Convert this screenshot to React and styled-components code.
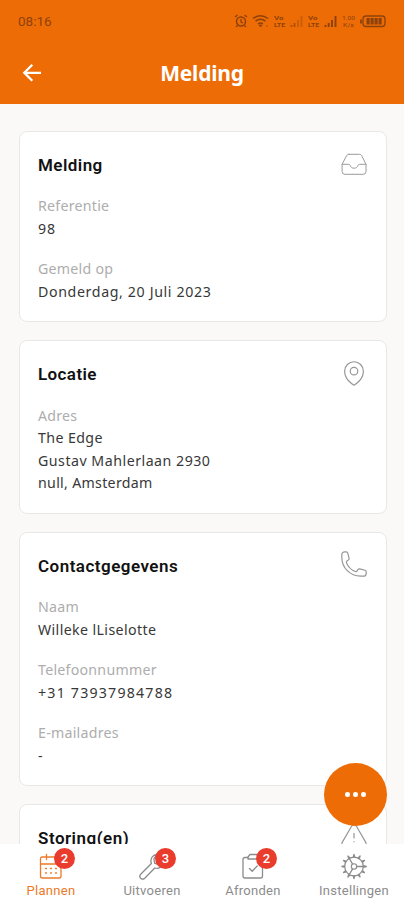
import React from "react";
import styled, { createGlobalStyle } from "styled-components";
import {
  HiOutlineMapPin,
  HiOutlinePhone,
  HiOutlineExclamationTriangle,
} from "react-icons/hi2";

const GlobalStyle = createGlobalStyle`
  *, *::before, *::after { box-sizing: border-box; }
  body { margin: 0; background: #faf9f8; }
`;

const Screen = styled.div`
  position: relative;
  display: flex;
  flex-direction: column;
  width: 404px;
  height: 900px;
  overflow: hidden;
  background: #faf9f8;
  font-family: "Noto Sans", sans-serif;
  color: #383838;
`;

const Header = styled.header`
  flex: none;
  height: 104px;
  background: #ed6c05;
`;

const StatusBar = styled.div`
  display: flex;
  align-items: center;
  justify-content: space-between;
  height: 42px;
  padding: 0 17px 0 18px;
  color: #8d420b;
`;

const Clock = styled.time`
  font: 400 13.5px/20px Roboto, sans-serif;
  letter-spacing: 0;
`;

const StatusIcons = styled.svg`
  display: block;
  width: 154px;
  height: 16px;
`;

const TitleBar = styled.div`
  display: grid;
  grid-template-columns: 1fr auto 1fr;
  align-items: center;
  height: 62px;
  padding: 0 20px;
`;

const BackButton = styled.button`
  display: flex;
  width: 24px;
  height: 24px;
  padding: 0;
  border: 0;
  background: none;
  color: #fff;
`;

const ScreenTitle = styled.h1`
  margin: 0;
  font-size: 21px;
  line-height: 28px;
  font-weight: 700;
  letter-spacing: -0.2px;
  color: #fff;
`;

const Content = styled.main`
  flex: 1;
  min-height: 0;
  overflow: hidden;
  display: flex;
  flex-direction: column;
  gap: 18px;
  padding: 27px 17.5px 0 18.5px;
`;

const CardBox = styled.section`
  flex: none;
  padding: 18px 18px 18px 18.5px;
  border: 1px solid #e9e8e7;
  border-radius: 8px;
  background: #fff;
`;

const CardHeader = styled.div`
  display: flex;
  align-items: center;
  justify-content: space-between;
  height: 28px;
  margin-bottom: 17.4px;
`;

const CardTitle = styled.h2`
  margin: 0;
  padding-top: 1.5px;
  font: 600 17px/24px Roboto, sans-serif;
  letter-spacing: ${(p) => p.$tracking}px;
  color: #111;
`;

const CardIcon = styled.span`
  display: flex;
  margin: -1px -1.5px 0 0;
  color: #969696;
  svg { width: 30px; height: 30px; }
  path { stroke-width: 0.95; }
`;

const Fields = styled.dl`
  display: flex;
  flex-direction: column;
  gap: 18px;
  margin: 0;
`;

const Label = styled.dt`
  font-size: 14.2px;
  line-height: 22.5px;
  letter-spacing: 0.25px;
  color: #adadad;
`;

const Value = styled.dd`
  margin: 0;
  font-size: 14.2px;
  line-height: 22.5px;
  letter-spacing: ${(p) => p.$tracking}px;
`;

const ActionButton = styled.button`
  position: absolute;
  right: 17px;
  bottom: 74px;
  display: flex;
  align-items: center;
  justify-content: center;
  gap: 3.4px;
  width: 63px;
  height: 63px;
  padding: 0;
  border: 0;
  border-radius: 50%;
  background: #ed6c05;
`;

const Dot = styled.span`
  width: 4.6px;
  height: 4.6px;
  border-radius: 50%;
  background: #fff;
`;

const TabBar = styled.nav`
  flex: none;
  display: grid;
  grid-template-columns: repeat(4, 101px);
  height: 56px;
  background: #fff;
`;

const Tab = styled.a`
  display: flex;
  flex-direction: column;
  align-items: center;
  padding-top: 7px;
  color: ${(p) => (p.$active ? "#ec7a2a" : "#8c8c8c")};
`;

const TabIcon = styled.span`
  position: relative;
  display: flex;
  width: 30px;
  height: 30px;
  margin-bottom: 1px;
  svg { width: 30px; height: 30px; }
  path { stroke-width: 1.3; }
`;

const Badge = styled.span`
  position: absolute;
  left: 18.5px;
  top: -3px;
  width: 21px;
  height: 21px;
  border-radius: 50%;
  background: #e93c2d;
  color: #fff;
  font: 500 13px/21px Roboto, sans-serif;
  text-align: center;
`;

const TabLabel = styled.span`
  padding-left: 1px;
  font: 400 13px/17px Roboto, sans-serif;
  letter-spacing: 0.28px;
`;

const Line = ({ children }) => (
  <svg viewBox="0 0 30 30" fill="none" stroke="currentColor" strokeLinecap="round" strokeLinejoin="round">
    {children}
  </svg>
);

const InboxIcon = () => (
  <Line>
    <g strokeWidth="1.200">
      <path d="M10 5.300h10.500c1 0 1.700.4 2.100 1.200L27 15.300v7.200a2.800 2.800 0 0 1-2.800 2.800H5.900a2.800 2.800 0 0 1-2.800-2.800v-7.200l4.600-8.800c.4-.8 1.200-1.200 2.300-1.200Z" />
      <path d="M3.200 15.300h6.200c1 0 1.600.5 2 1.400.5 1.500 1.500 2.500 3.700 2.500s3.200-1 3.700-2.500c.4-.9 1-1.400 2-1.400H27" />
    </g>
  </Line>
);

const CalendarIcon = () => (
  <Line>
    <path d="M6 6h17.500a1.500 1.500 0 0 1 1.500 1.500V25a2 2 0 0 1-2 2H6.500a2 2 0 0 1-2-2V7.500A1.500 1.500 0 0 1 6 6ZM4.500 13h20.500M10.500 3.500v5M19.500 3.500v5" />
    <path d="M9.500 17.500h1M14.500 17.500h1M19.500 17.500h1M9.500 22h1M14.500 22h1M19.500 22h1" />
  </Line>
);

const WrenchIcon = () => (
  <Line>
    <path d="M19.800 3.500c-4.500.5-6.900 4.600-5.400 9L3.700 23.200a2.900 2.900 0 0 0 0 4 2.900 2.900 0 0 0 4 0L17.800 17c4.800 1.500 9.200-2.200 8.900-7.200l-4.300 3.700-4.700-1.200-.8-4.500Z" />
  </Line>
);

const ClipboardIcon = () => (
  <Line>
    <path d="M10 6.500H7a2 2 0 0 0-2 2V25a2 2 0 0 0 2 2h15.500a2 2 0 0 0 2-2V8.500a2 2 0 0 0-2-2H20" />
    <path d="M12 3.500h6.500l1.500 2v2.500H10v-2ZM11.500 17.500l2.700 2.700 5-5.200" />
  </Line>
);

const teeth = Array.from({ length: 12 }, (_, i) => i * 30);

const GearIcon = () => (
  <Line>
    <circle cx="15" cy="15.500" r="9.300" strokeWidth="1.200" />
    <circle cx="15" cy="15.500" r="2.700" strokeWidth="1.100" />
    {teeth.map((a) => (
      <path key={a} d="M14.300 6 15 3.400 15.700 6" transform={`rotate(${a} 15 15.500)`} />
    ))}
    <path d="M17.700 15.500H27M13.600 13.100 10.300 7.500M13.600 17.900l-3.300 5.600" />
  </Line>
);

const StatusGlyphs = () => (
  <StatusIcons viewBox="0 0 154 16" fill="none" stroke="currentColor">
    <circle cx="8" cy="8.500" r="4.500" strokeWidth="1.500" />
    <path d="M8 6v3l2 1M2 4l2.500-2M14 4l-2.500-2M4.500 12.500 3 14M11.500 12.500 13 14" strokeWidth="1.300" />
    <path d="M20 5.500q7.500-5.500 15 0M22.500 8.200q5-3.700 10 0M25 11q2.500-2 5 0" strokeWidth="1.500" />
    <path d="m27.500 14-1.600-2h3.200ZM33 13h2" fill="currentColor" strokeWidth=".6" />
    <g fill="currentColor" stroke="none" fontFamily="Roboto, sans-serif" fontWeight="700" fontSize="6.200">
      <text x="41" y="6.900" textLength="9.500" lengthAdjust="spacingAndGlyphs">Vo</text>
      <text x="41" y="14.300" textLength="11" lengthAdjust="spacingAndGlyphs">LTE</text>
      <text x="75" y="6.900" textLength="9.500" lengthAdjust="spacingAndGlyphs">Vo</text>
      <text x="75" y="14.300" textLength="11" lengthAdjust="spacingAndGlyphs">LTE</text>
      <g fontWeight="400">
        <text x="109" y="6.900" textLength="13" lengthAdjust="spacingAndGlyphs">1.00</text>
        <text x="110" y="14.300" textLength="11" lengthAdjust="spacingAndGlyphs">K/s</text>
      </g>
    </g>
    <path d="M58.500 14v-2M61.500 14v-4" strokeWidth="1.800" opacity=".7" />
    <path d="M65 14V7M68.500 14V3" strokeWidth="1.800" opacity=".35" />
    <path d="M92.500 14v-2M95.700 14v-4M99 14V7M102.500 14V3" strokeWidth="1.900" />
    <rect x="130" y="3" width="22" height="10.500" rx="3" strokeWidth="1.300" />
    <path d="M133.500 8.200h15.500" strokeWidth="6.500" strokeDasharray="3.200 .8" />
    <path d="M128 6.500v4" strokeWidth="1.800" />
  </StatusIcons>
);

const cards = [
  {
    title: "Melding", tracking: 0.45, Icon: InboxIcon,
    fields: [
      { label: "Referentie", lines: [["98", 0.9]] },
      { label: "Gemeld op", lines: [["Donderdag, 20 Juli 2023", 0.63]] },
    ],
  },
  {
    title: "Locatie", tracking: 0.4, Icon: HiOutlineMapPin,
    fields: [
      {
        label: "Adres",
        lines: [["The Edge", 0.4], ["Gustav Mahlerlaan 2930", 0.5], ["null, Amsterdam", 0.3]],
      },
    ],
  },
  {
    title: "Contactgegevens", tracking: 0.48, Icon: HiOutlinePhone,
    fields: [
      { label: "Naam", lines: [["Willeke lLiselotte", 0.38]] },
      { label: "Telefoonnummer", lines: [["+31 73937984788", 1.2]] },
      { label: "E-mailadres", lines: [["-", 0]] },
    ],
  },
  { title: "Storing(en)", tracking: 0.5, Icon: HiOutlineExclamationTriangle, fields: [] },
];

const tabs = [
  { label: "Plannen", Icon: CalendarIcon, badge: 2, active: true },
  { label: "Uitvoeren", Icon: WrenchIcon, badge: 3 },
  { label: "Afronden", Icon: ClipboardIcon, badge: 2 },
  { label: "Instellingen", Icon: GearIcon },
];

function Card({ title, tracking, Icon, fields }) {
  return (
    <CardBox>
      <CardHeader>
        <CardTitle $tracking={tracking}>{title}</CardTitle>
        <CardIcon><Icon /></CardIcon>
      </CardHeader>
      <Fields>
        {fields.map(({ label, lines }) => (
          <div key={label}>
            <Label>{label}</Label>
            {lines.map(([text, spacing]) => (
              <Value key={text} $tracking={spacing}>{text}</Value>
            ))}
          </div>
        ))}
      </Fields>
    </CardBox>
  );
}

export default function App() {
  return (
    <Screen>
      <GlobalStyle />
      <Header>
        <StatusBar>
          <Clock>08:16</Clock>
          <StatusGlyphs />
        </StatusBar>
        <TitleBar>
          <BackButton aria-label="Terug">
            <svg width="24" height="24" viewBox="0 0 24 24" fill="none" stroke="currentColor" strokeWidth="2.300">
              <path d="M21 11.800H4.800M12.300 3.800l-8 8 8 8" />
            </svg>
          </BackButton>
          <ScreenTitle>Melding</ScreenTitle>
        </TitleBar>
      </Header>
      <Content>
        {cards.map((c) => <Card key={c.title} {...c} />)}
      </Content>
      <TabBar>
        {tabs.map(({ label, Icon, badge, active }) => (
          <Tab key={label} $active={active}>
            <TabIcon>
              <Icon />
              {badge && <Badge>{badge}</Badge>}
            </TabIcon>
            <TabLabel>{label}</TabLabel>
          </Tab>
        ))}
      </TabBar>
      <ActionButton aria-label="Meer">
        <Dot /><Dot /><Dot />
      </ActionButton>
    </Screen>
  );
}
